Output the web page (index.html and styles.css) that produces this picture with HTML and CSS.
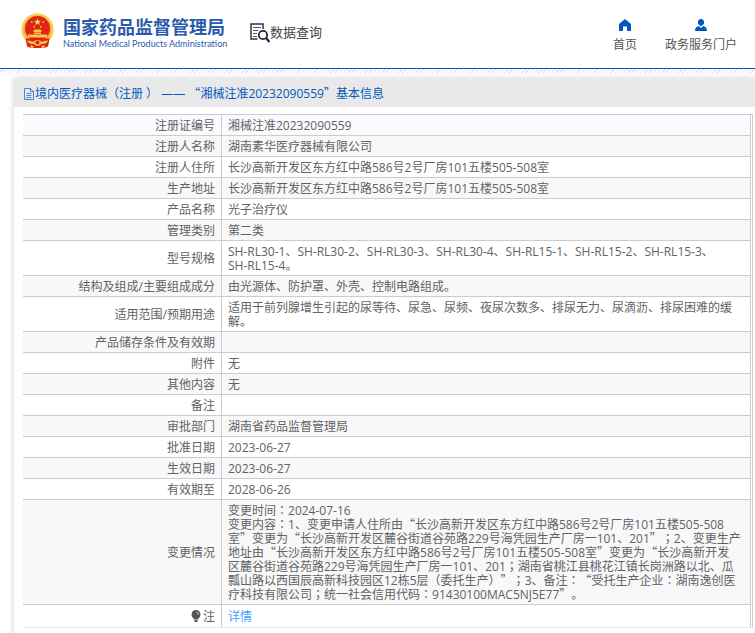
FILE: index.html
```html
<!DOCTYPE html>
<html lang="zh-CN">
<head>
    <meta charset="utf-8">
    <title>国家药品监督管理局 数据查询</title>
    <link rel="stylesheet" href="styles.css">
</head>
<body>
    <header class="header">
        <div class="brand">
            <svg class="emblem" viewBox="0 0 33 36">
                <path d="M7 25h-1l1 9 5 1 4.500-1 4.500 1 5-1 1-9z" fill="#d8201c" />
                <circle cx="16.500" cy="16.500" r="16" fill="#efb32d" />
                <circle cx="16.500" cy="16.500" r="15" fill="none" stroke="#f8d45c" stroke-width="1.500" />
                <circle cx="16.500" cy="15.500" r="12.500" fill="#e2231a" />
                <path d="M16.500 5.500l1 2.300 2.500.2-1.900 1.600.6 2.400-2.200-1.300-2.200 1.300.6-2.400L13 8l2.500-.2z" fill="#f9d648" />
                <path d="M10 8.500h1.500V10H10zM21.500 8.500H23V10h-1.500zM12.500 13H14v1.500h-1.500zM19 13h1.500v1.500H19z" fill="#f9d648" />
                <path d="M12.500 18l1-1.500h6l1 1.500v1h-8zM13 19.500h7V21h-7zM7 21.500h19v3H7z" fill="#f7c944" />
                <path d="M4.500 25.500h24l-1.500 8-5 1.500h-11l-5-1.500z" fill="#dc211b" />
                <path d="M6 27.500c4 0 5 1.500 7 1 1.500-2 5.500-2 7 0 2 .5 3-1 7-1-1 3-4 3.500-7 3.500-1 2.500-6 2.500-7 0-3 0-6-.5-7-3.500z" fill="#f5c33d" />
                <circle cx="16.500" cy="29.500" r="2" fill="#e2231a" />
                <path d="M10 32l3 1.500-1 1.500-3-.5zM23 32l-3 1.500 1 1.500 3-.5z" fill="#f5c33d" />
            </svg>
            <div class="brand-text">
                <div class="brand-cn">国家药品监督管理局</div>
                <div class="brand-en">National Medical Products Administration</div>
            </div>
            <div class="query">
                <svg class="query-icon" viewBox="0 0 20 20">
                    <path d="M7.500 16H1V1h12v5" fill="none" stroke="#33334d" stroke-width="1.500" />
                    <path d="M3 4.500h8M3 7.500h5M3 10.500h4M3 13.500h4" stroke="#55556a" stroke-width="1.200" />
                    <circle cx="13" cy="12" r="4.200" fill="#fff" stroke="#26264a" stroke-width="1.800" />
                    <path d="M16 15l3.500 4" stroke="#26264a" stroke-width="2.400" />
                </svg>
                <span>数据查询</span>
            </div>
        </div>
        <nav class="nav">
            <a class="nav-item" href="#">
                <svg class="nav-icon" viewBox="0 0 12 12"><path d="M6 0L0 5v7h4V7.500h4V12h4V5z" /></svg>
                <span>首页</span>
            </a>
            <a class="nav-item" href="#">
                <svg class="nav-icon" viewBox="0 0 12 12"><path d="M6 0a3.200 3.200 0 0 1 1.500 6L6 7.500 4.500 6A3.200 3.200 0 0 1 6 0zM3.500 7L6 9l2.500-2C11 7.500 12 9.500 12 12H0c0-2.500 1-4.500 3.500-5z" /></svg>
                <span>政务服务门户</span>
            </a>
        </nav>
    </header>
    <div class="hatch"></div>

    <main class="panel">
        <h1 class="panel-title">
            <svg class="doc-icon" viewBox="0 0 12 12"><path d="M1.500.5H7.500L10.500 3.500V11.500H1.500zM7.500.5V3.500H10.500M3.500 5.500H8.500M3.500 7.500H8.500M3.500 9.500H8.500" fill="none" stroke="#4a86d0" /></svg>
            <span>境内医疗器械（注册 ） —— <span class="q">“</span>湘械注准20232090559<span class="q">”</span>基本信息</span>
        </h1>
        <div class="table-wrap">
            <table class="info">
                <tr><th scope="row">注册证编号</th><td>湘械注准20232090559</td></tr>
                <tr><th scope="row">注册人名称</th><td>湖南素华医疗器械有限公司</td></tr>
                <tr><th scope="row">注册人住所</th><td>长沙高新开发区东方红中路586号2号厂房101五楼505-508室</td></tr>
                <tr><th scope="row">生产地址</th><td>长沙高新开发区东方红中路586号2号厂房101五楼505-508室</td></tr>
                <tr><th scope="row">产品名称</th><td>光子治疗仪</td></tr>
                <tr><th scope="row">管理类别</th><td>第二类</td></tr>
                <tr><th scope="row">型号规格</th><td>SH-RL30-1、SH-RL30-2、SH-RL30-3、SH-RL30-4、SH-RL15-1、SH-RL15-2、SH-RL15-3、<br>SH-RL15-4。</td></tr>
                <tr><th scope="row">结构及组成/主要组成成分</th><td>由光源体、防护罩、外壳、控制电路组成。</td></tr>
                <tr><th scope="row">适用范围/预期用途</th><td>适用于前列腺增生引起的尿等待、尿急、尿频、夜尿次数多、排尿无力、尿滴沥、排尿困难的缓解。</td></tr>
                <tr><th scope="row">产品储存条件及有效期</th><td></td></tr>
                <tr><th scope="row">附件</th><td>无</td></tr>
                <tr><th scope="row">其他内容</th><td>无</td></tr>
                <tr><th scope="row">备注</th><td></td></tr>
                <tr><th scope="row">审批部门</th><td>湖南省药品监督管理局</td></tr>
                <tr><th scope="row">批准日期</th><td>2023-06-27</td></tr>
                <tr><th scope="row">生效日期</th><td>2023-06-27</td></tr>
                <tr><th scope="row">有效期至</th><td>2028-06-26</td></tr>
                <tr><th scope="row">变更情况</th><td>变更时间<span class="mid" lang="zh-TW">：</span>2024-07-16<br>变更内容<span class="mid" lang="zh-TW">：</span>1、变更申请人住所由<span class="q">“</span>长沙高新开发区东方红中路586号2号厂房101五楼505-508室<span class="q">”</span>变更为<span class="q">“</span>长沙高新开发区麓谷街道谷苑路229号海凭园生产厂房一101、201<span class="q">”</span><span class="mid" lang="zh-TW">；</span>2、变更生产地址由<span class="q">“</span>长沙高新开发区东方红中路586号2号厂房101五楼505-508室<span class="q">”</span>变更为<span class="q">“</span>长沙高新开发<br>区麓谷街道谷苑路229号海凭园生产厂房一101、201<span class="mid" lang="zh-TW">；</span>湖南省桃江县桃花江镇长岗洲路以北、瓜<br>瓢山路以西国辰高新科技园区12栋5层（委托生产）<span class="q">”</span><span class="mid" lang="zh-TW">；</span>3、备注<span class="mid" lang="zh-TW">：</span><span class="q">“</span>受托生产企业<span class="mid" lang="zh-TW">：</span>湖南逸创医<br>疗科技有限公司<span class="mid" lang="zh-TW">；</span>统一社会信用代码<span class="mid" lang="zh-TW">：</span>91430100MAC5NJ5E77<span class="q">”</span>。</td></tr>
                <tr class="last"><th scope="row"><svg class="bulb" viewBox="0 0 10 12"><path d="M5 0a4.500 4.500 0 0 1 2.500 8.200V9.500h-5V8.200A4.500 4.500 0 0 1 5 0zM3.500 10h3v2h-3z" fill="#555" /><path d="M5.500 2Q7.500 2.500 7.500 4.500" fill="none" stroke="#fff" stroke-width=".8" /></svg>注</th><td><a class="detail" href="#">详情</a></td></tr>
            </table>
        </div>
    </main>
</body>
</html>
```
FILE: styles.css
```css
* {
    box-sizing: border-box;
}

body {
    margin: 0;
    background: #fff;
    color: #606266;
    font-family: "Open Sans", "Noto Sans CJK SC", sans-serif;
    font-size: 12px;
    line-height: 14px;
    text-spacing-trim: space-all;
}

a {
    color: inherit;
    text-decoration: none;
}

/* header */
.header {
    display: flex;
    justify-content: space-between;
    height: 69px;
    padding: 0 18px 0 21px;
    border-bottom: 1px solid #0059be;
}

.brand {
    display: flex;
    align-items: flex-start;
    padding-top: 13px;
}

.emblem {
    width: 33px;
    height: 36px;
    margin-right: 9px;
}

.brand-text {
    width: 162px;
    color: #2b5cab;
    white-space: nowrap;
}

.brand-cn {
    padding-top: 2px;
    font-family: "Noto Sans CJK SC", sans-serif;
    font-size: 18px;
    font-weight: 700;
    line-height: 22px;
}

.brand-en {
    padding-top: 1px;
    font-family: Lato, sans-serif;
    font-size: 9px;
    font-weight: 400;
    line-height: 12px;
}

.query {
    display: flex;
    padding-top: 10px;
    margin-left: 25px;
    color: #444;
    font-size: 13px;
    line-height: 18px;
}

.query-icon {
    width: 20px;
    height: 20px;
}

.nav {
    display: flex;
    gap: 28px;
    padding-top: 19px;
    color: #555;
}

.nav-item {
    display: flex;
    flex-direction: column;
    align-items: center;
    gap: 7px;
}

.nav-icon {
    width: 12px;
    height: 12px;
    fill: #0059be;
}

.hatch {
    height: 4px;
    background: repeating-linear-gradient(135deg, #fff 0 2px, #e4e4e4 2px 3px);
}

/* content */
.panel {
    margin: 6px 0 0 14px;
    padding-bottom: 24px;
    box-shadow: 0 0 6px #ccc;
}

.panel-title {
    display: flex;
    align-items: center;
    height: 28px;
    margin: 0;
    padding: 2px 0 0 9px;
    background: #e9e9e9;
    color: #0059be;
    font-size: 12px;
    font-weight: 400;
}

.doc-icon {
    width: 12px;
    height: 12px;
}

.table-wrap {
    margin: 7px 2px 0 9px;
    padding-right: 1px;
    border: 1px solid #ccc;
    border-width: 1px 1px 1px 0;
    border-bottom-color: #e4e8f6;
}

.info {
    width: 100%;
    border-collapse: separate;
    border-spacing: 0;
    border-right: 1px solid #ccc;
}

.info th,
.info td {
    height: 21px;
    padding: 4px 6px 2px;
    border-bottom: 1px solid #ccc;
    font-weight: 400;
}

.info th {
    width: 199px;
    border-right: 1px solid #ccc;
    text-align: right;
}

.info tr:nth-child(even) {
    background: #f8f8f8;
}

.info tr:first-child {
    background: #fafbfe;
}

.info .last th,
.info .last td {
    height: 22px;
    border-bottom: 0;
}

/* the remark row is the 19th, so it stays white */
.bulb {
    width: 10px;
    height: 12px;
    margin-right: 2px;
    vertical-align: -1px;
}

.detail {
    color: #409eff;
}

/* full-width quotes, centred colons; no line height so the rows keep 14px lines */
.q,
.mid {
    font-family: "Noto Sans CJK SC", sans-serif;
    line-height: 0;
}

.mid {
    font-family: "Noto Sans CJK TC", sans-serif;
}
```
